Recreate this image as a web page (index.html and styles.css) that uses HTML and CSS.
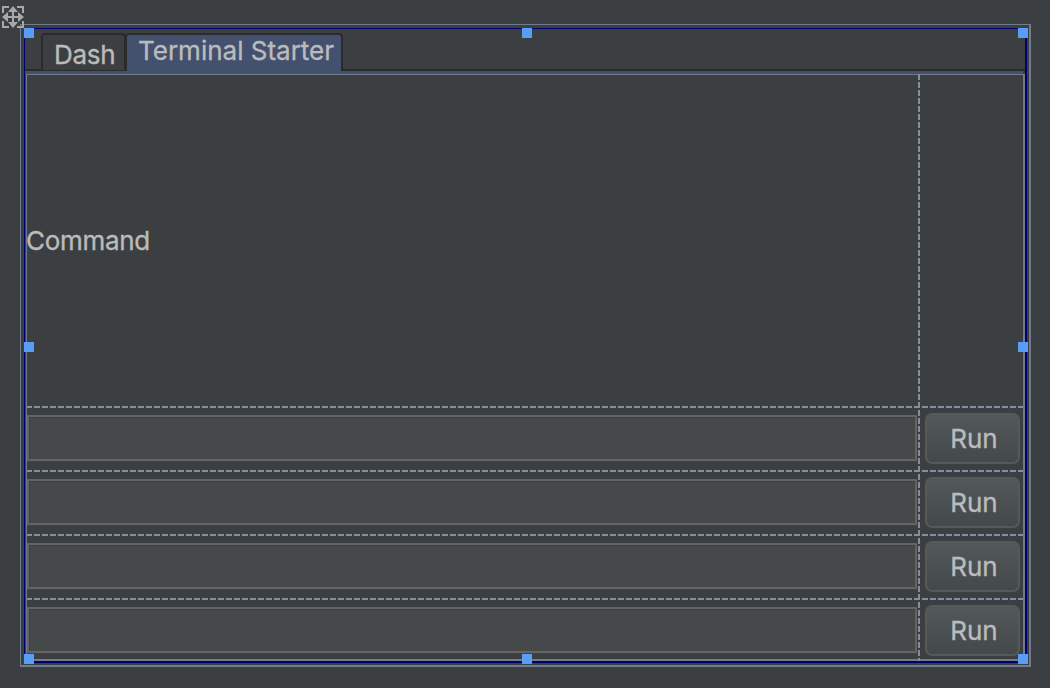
FILE: index.html
```html
<!DOCTYPE html>
<html lang="en">
<head>
<meta charset="utf-8">
<title>Form Designer</title>
<link rel="stylesheet" href="styles.css">
</head>
<body>
<main class="canvas">
  <svg class="move" viewBox="0 0 22 22" aria-label="Move">
    <path d="M1 7V1H7M15 1H21V7M21 15V21H15M7 21H1V15M11 3V19M3 11H19" fill="none" stroke="#a8a9a7" stroke-width="2"/>
    <path d="M11 0L16 6H6ZM11 22L16 16H6ZM0 11L6 6V16ZM22 11L16 6V16Z" fill="#a8a9a7"/>
  </svg>
  <section class="frame">
    <div class="selection">
      <nav class="tabs">
        <div class="tab dash"><span>Dash</span></div>
        <div class="tab active"><span>Terminal Starter</span></div>
      </nav>
      <div class="form">
        <div class="header"><span class="command">Command</span></div>
        <div class="row"><input class="field" aria-label="Command 1"><button class="run">Run</button></div>
        <div class="row"><input class="field" aria-label="Command 2"><button class="run">Run</button></div>
        <div class="row"><input class="field" aria-label="Command 3"><button class="run">Run</button></div>
        <div class="row"><input class="field" aria-label="Command 4"><button class="run">Run</button></div>
        <i class="divider"></i>
      </div>
      <i class="handle top left"></i><i class="handle top center"></i><i class="handle top right"></i>
      <i class="handle middle left"></i><i class="handle middle right"></i>
      <i class="handle bottom left"></i><i class="handle bottom center"></i><i class="handle bottom right"></i>
    </div>
  </section>
</main>
</body>
</html>
```
FILE: styles.css
```css
* { box-sizing: border-box; }
body { margin: 0; background: #3c3f41; color: #bbb; font: 26px/32px Inter, "Liberation Sans", sans-serif; -webkit-text-stroke: .35px #bbb; }
.canvas { position: relative; height: 688px; padding: 24px 19px 21px 20px; overflow: hidden; }
.move { position: absolute; left: 2px; top: 6px; width: 22px; height: 22px; }
.frame { height: 643px; padding: 3px 2px 2px 3px; border: solid #717b8e; border-width: 1px 2px 2px 1px; }
.selection { position: relative; height: 635px; border: solid #00006e; border-width: 1px 2px 2px 1px; }
.tabs { display: flex; height: 45px; padding: 4px 0 0 16px; background: linear-gradient(#2b2b2b, #2b2b2b) 0 40px / 100% 2px no-repeat, linear-gradient(#43506e, #43506e) 0 42px / 998px 3px no-repeat; }
.tab { height: 38px; border: 2px solid #2b2b2b; white-space: nowrap; }
.dash { width: 85px; padding: 4px 0 0 11px; border-bottom-width: 1px; border-radius: 4px 4px 0 0; background: #3c3f41; letter-spacing: -.25px; }
.active { width: 218px; margin-left: -1px; padding: 0 0 0 11px; border-bottom: 0; border-radius: 4px 4px 0 0; background: #43506e; }
.tab span { display: block; }
.form { position: relative; display: flex; flex-direction: column; width: 999px; height: 587px; margin-left: 1px; border: solid #717b8e; border-width: 1px 2px 2px 1px; }
.header { display: flex; flex: none; align-items: center; height: 331px; }
.command { margin-left: -1px; letter-spacing: -.3px; }
.row { display: flex; flex: none; height: 64px; padding-top: 7px; background: repeating-linear-gradient(90deg, #858e9f 0 6px, transparent 6px 8px) -1px 0 / 1000px 2px no-repeat; }
.row:nth-child(5) { height: 61px; }
.field { width: 890px; height: 46px; margin: 2px 8px 0 0; padding: 0 6px; border: 2px solid #646464; border-radius: 0; outline: none; background: #45494a; box-shadow: inset 1px 1px #3d4041, 0 1px #414445; color: #bbb; font: inherit; }
.run { width: 95px; height: 51px; padding: 1px 0 0 3px; border: 2px solid #55595a; border-radius: 7px; background: linear-gradient(#53585b, #434849) border-box; color: #bbb; font: inherit; }
.divider { position: absolute; left: 891px; top: -1px; width: 2px; height: 587px; background: repeating-linear-gradient(#858e9f 0 6px, transparent 6px 8px); }
.handle { position: absolute; width: 10px; height: 10px; background: #589df6; }
.top { top: -1px; }
.middle { top: 313px; }
.bottom { top: 625px; }
.left { left: -1px; }
.center { left: 497px; }
.right { left: 993px; }
```
